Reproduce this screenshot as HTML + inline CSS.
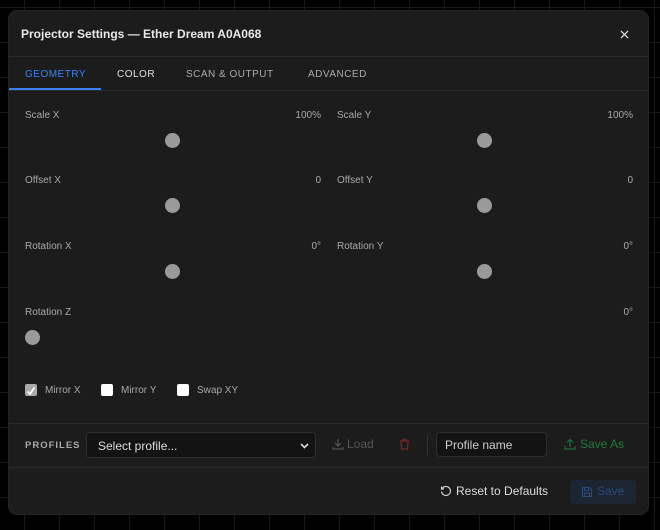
<!DOCTYPE html>
<html><head><meta charset="utf-8"><style>
*{box-sizing:border-box;margin:0;padding:0}
body{width:660px;height:530px;overflow:hidden;background:#000;font-family:"Liberation Sans",sans-serif;position:relative;
background-image:linear-gradient(to right,#191919 1px,transparent 1px),linear-gradient(to bottom,#191919 1px,transparent 1px);
background-size:35px 35px;background-position:24px 7px}
.dlg{position:absolute;left:8px;top:10px;width:641px;height:505px;background:#1c1c1c;border-radius:9px;border:1px solid #242424;overflow:hidden}
.hdr{height:46px;border-bottom:1px solid #2c2c2c;position:relative}
.hdr h1{position:absolute;left:12px;top:16px;font-size:12px;font-weight:bold;color:#e8e8e8}
.x{position:absolute;right:19px;top:19px}
.tabs{height:34px;border-bottom:1px solid #2c2c2c;position:relative;font-size:10px;letter-spacing:.5px}
.tabs span{position:absolute;top:12px;color:#aaa}
.tabs .act{color:#3b82f6}
.tabs .ul{position:absolute;left:0;top:31px;width:92px;height:2px;background:#3b82f6}
.lab{position:absolute;font-size:10px;color:#a8a8a8}
.val{position:absolute;font-size:10px;color:#a8a8a8;text-align:right}
.dot{position:absolute;width:15px;height:15px;border-radius:50%;background:#9a9a9a}
.cb{position:absolute;width:12px;height:12px;border-radius:2px;background:#fff}
.sep{position:absolute;left:0;width:640px;height:1px;background:#2c2c2c}
</style></head><body>
<div class="dlg">
<div class="hdr"><h1>Projector Settings — Ether Dream A0A068</h1>
<svg class="x" width="9" height="9" viewBox="0 0 10 10"><path d="M1 1L9 9M9 1L1 9" stroke="#ddd" stroke-width="1.4"/></svg></div>
<div class="tabs"><span class="act" style="left:16px">GEOMETRY</span><span style="left:108px;color:#e0e0e0">COLOR</span><span style="left:177px">SCAN &amp; OUTPUT</span><span style="left:299px">ADVANCED</span><div class="ul"></div></div>

<div class="lab" style="left:16px;top:99px">Scale X</div><div class="val" style="left:240px;width:72px;top:99px">100%</div>
<div class="lab" style="left:328px;top:99px">Scale Y</div><div class="val" style="left:552px;width:72px;top:99px">100%</div>
<div class="dot" style="left:156px;top:122px"></div><div class="dot" style="left:468px;top:122px"></div>

<div class="lab" style="left:16px;top:164px">Offset X</div><div class="val" style="left:240px;width:72px;top:164px">0</div>
<div class="lab" style="left:328px;top:164px">Offset Y</div><div class="val" style="left:552px;width:72px;top:164px">0</div>
<div class="dot" style="left:156px;top:187px"></div><div class="dot" style="left:468px;top:187px"></div>

<div class="lab" style="left:16px;top:230px">Rotation X</div><div class="val" style="left:240px;width:72px;top:230px">0°</div>
<div class="lab" style="left:328px;top:230px">Rotation Y</div><div class="val" style="left:552px;width:72px;top:230px">0°</div>
<div class="dot" style="left:156px;top:253px"></div><div class="dot" style="left:468px;top:253px"></div>

<div class="lab" style="left:16px;top:296px">Rotation Z</div><div class="val" style="left:552px;width:72px;top:296px">0°</div>
<div class="dot" style="left:16px;top:319px"></div>

<div class="cb" style="left:16px;top:373px;background:#aaa"><svg width="12" height="12" viewBox="0 0 12 12"><path d="M2.5 6.5L5 9L9.5 2.5" stroke="#fff" stroke-width="1.6" fill="none"/></svg></div>
<div class="lab" style="left:36px;top:374px">Mirror X</div>
<div class="cb" style="left:92px;top:373px"></div><div class="lab" style="left:112px;top:374px">Mirror Y</div>
<div class="cb" style="left:168px;top:373px"></div><div class="lab" style="left:188px;top:374px">Swap XY</div>

<div class="sep" style="top:412px"></div>
<div class="lab" style="left:16px;top:429px;font-weight:bold;letter-spacing:1px;font-size:9.5px">PROFILES</div>
<div style="position:absolute;left:77px;top:421px;width:230px;height:26px;background:#131313;border:1px solid #2e2e2e;border-radius:4px;color:#ddd;font-size:12px;padding:6px 11px">Select profile...<svg style="position:absolute;right:6px;top:10px" width="9" height="6" viewBox="0 0 9 6"><path d="M1 1L4.5 4.5L8 1" stroke="#ddd" stroke-width="1.6" fill="none"/></svg></div>
<svg style="position:absolute;left:323px;top:427px" width="12" height="12" viewBox="0 0 12 12"><path d="M6 1V8M3 5L6 8L9 5M1 9V11H11V9" stroke="#555" stroke-width="1.2" fill="none"/></svg>
<div class="lab" style="left:338px;top:426px;font-size:12px;color:#555">Load</div>
<svg style="position:absolute;left:390px;top:427px" width="11" height="12" viewBox="0 0 11 12"><path d="M1 3H10M4 3V1.5H7V3M2 3L2.6 11H8.4L9 3" stroke="#7a2222" stroke-width="1.3" fill="none"/></svg>
<div style="position:absolute;left:418px;top:424px;width:1px;height:20px;background:#333"></div>
<div style="position:absolute;left:427px;top:421px;width:111px;height:25px;background:#131313;border:1px solid #2e2e2e;border-radius:4px;color:#ccc;font-size:12px;padding:5px 8px">Profile name</div>
<svg style="position:absolute;left:555px;top:427px" width="12" height="12" viewBox="0 0 12 12"><path d="M6 9V2M3 4.5L6 1.5L9 4.5M1 8V11H11V8" stroke="#1f6e38" stroke-width="1.2" fill="none"/></svg>
<div class="lab" style="left:571px;top:426px;font-size:12px;color:#1f7a3c">Save As</div>
<div class="sep" style="top:456px"></div>
<svg style="position:absolute;left:431px;top:474px" width="12" height="12" viewBox="0 0 12 12"><path d="M2.2 3.5A4.5 4.5 0 1 1 1.5 6.5M1.5 1.5V4H4" stroke="#ccc" stroke-width="1.2" fill="none"/></svg>
<div class="lab" style="left:447px;top:473px;font-size:12px;color:#ddd">Reset to Defaults</div>
<div style="position:absolute;left:561px;top:469px;width:66px;height:24px;background:#1d2533;border-radius:4px"></div>
<svg style="position:absolute;left:572px;top:475px" width="12" height="12" viewBox="0 0 12 12"><path d="M1.5 1.5H8.5L10.5 3.5V10.5H1.5ZM3.5 1.5V4.5H7.5V1.5M3.5 10.5V7H8.5V10.5" stroke="#2e4a78" stroke-width="1.1" fill="none"/></svg>
<div class="lab" style="left:588px;top:473px;font-size:12px;color:#2f4c7c">Save</div>
</div>
</body></html>
